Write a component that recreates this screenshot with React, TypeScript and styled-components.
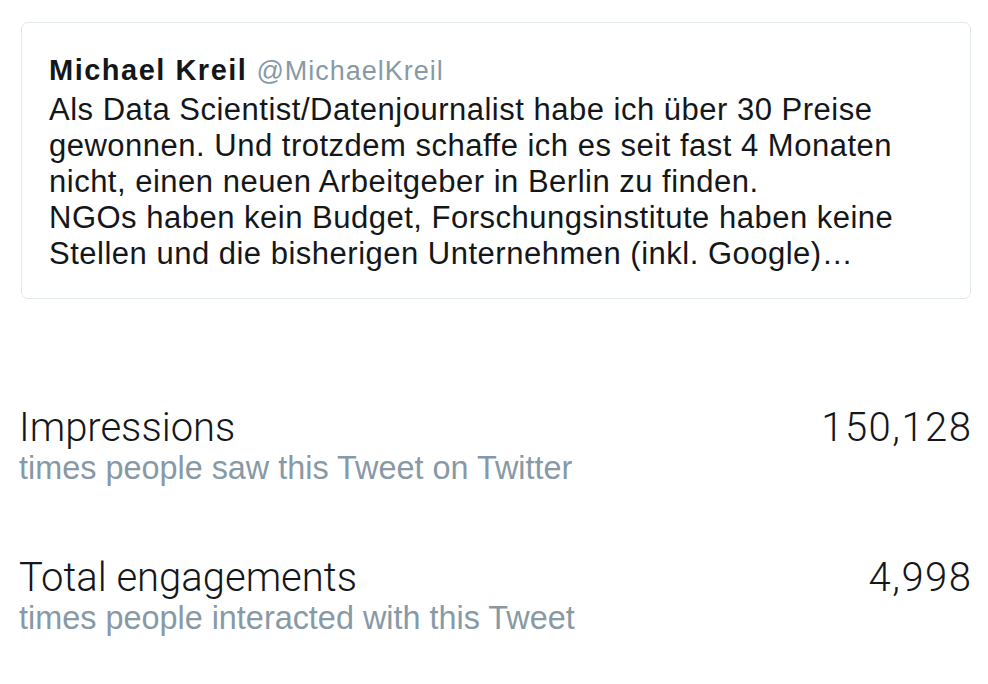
import React from "react";
import styled, { createGlobalStyle } from "styled-components";

const COLORS = {
  text: "#14171a",
  grey: "#8899a6",
  border: "#e1e8ed",
};

const GlobalStyle = createGlobalStyle`
  html, body {
    margin: 0;
    padding: 0;
    background: #ffffff;
  }

  body {
    font-family: "Liberation Sans", Arial, sans-serif;
    color: ${COLORS.text};
  }
`;

interface Metric {
  title: string;
  description: string;
  value: string;
}

const tweetLines = [
  "Als Data Scientist/Datenjournalist habe ich über 30 Preise",
  "gewonnen. Und trotzdem schaffe ich es seit fast 4 Monaten",
  "nicht, einen neuen Arbeitgeber in Berlin zu finden.",
  "NGOs haben kein Budget, Forschungsinstitute haben keine",
  "Stellen und die bisherigen Unternehmen (inkl. Google)…",
];

const metrics: Metric[] = [
  {
    title: "Impressions",
    description: "times people saw this Tweet on Twitter",
    value: "150,128",
  },
  {
    title: "Total engagements",
    description: "times people interacted with this Tweet",
    value: "4,998",
  },
];

const App: React.FC = () => {
  return (
    <>
      <GlobalStyle />
      <Page>
        <TweetCard>
          <TweetHeader>
            <span className="name">Michael Kreil</span>
            <span className="handle">@MichaelKreil</span>
          </TweetHeader>
          <TweetText>
            {tweetLines.map((line, index) => (
              <span key={index}>{line}</span>
            ))}
          </TweetText>
        </TweetCard>

        <MetricsList>
          {metrics.map((metric) => (
            <MetricRow key={metric.title}>
              <MetricInfo>
                <div className="metric-title">{metric.title}</div>
                <div className="metric-description">{metric.description}</div>
              </MetricInfo>
              <MetricValue>{metric.value}</MetricValue>
            </MetricRow>
          ))}
        </MetricsList>
      </Page>
    </>
  );
};

const Page = styled.div`
  display: flex;
  flex-direction: column;

  width: 988px;
  height: 684px;
  padding: 22px 17px 0 19px;
  box-sizing: border-box;
  overflow: hidden;
`;

const TweetCard = styled.div`
  display: flex;
  flex-direction: column;
  gap: 3px;

  margin-left: 2px;
  padding: 29px 28px 26px 27px;

  border: 1px solid ${COLORS.border};
  border-radius: 7px;
`;

const TweetHeader = styled.div`
  display: flex;
  align-items: baseline;
  gap: 9px;

  line-height: 36px;
  white-space: nowrap;

  .name {
    font-size: 29px;
    font-weight: 700;
    letter-spacing: 1.5px;
    color: ${COLORS.text};
  }

  .handle {
    font-size: 27px;
    letter-spacing: 1px;
    color: ${COLORS.grey};
  }
`;

const TweetText = styled.div`
  display: flex;
  flex-direction: column;

  font-size: 31px;
  line-height: 36px;
  letter-spacing: 0.5px;
  color: ${COLORS.text};
  white-space: nowrap;
`;

const MetricsList = styled.div`
  display: flex;
  flex-direction: column;
  gap: 70px;

  margin-top: 107px;
`;

const MetricRow = styled.div`
  display: flex;
  justify-content: space-between;
  align-items: flex-start;
`;

const MetricInfo = styled.div`
  display: flex;
  flex-direction: column;

  .metric-title {
    font-family: Roboto, "Liberation Sans", sans-serif;
    font-size: 40px;
    font-weight: 300;
    line-height: 44px;
    color: ${COLORS.text};
  }

  .metric-description {
    font-size: 32.4px;
    line-height: 36px;
    color: ${COLORS.grey};
  }
`;

const MetricValue = styled.div`
  margin-right: -1.5px;

  font-family: Roboto, "Liberation Sans", sans-serif;
  font-size: 40px;
  font-weight: 300;
  line-height: 44px;
  letter-spacing: 1.5px;
  color: ${COLORS.text};
`;

export default App;
